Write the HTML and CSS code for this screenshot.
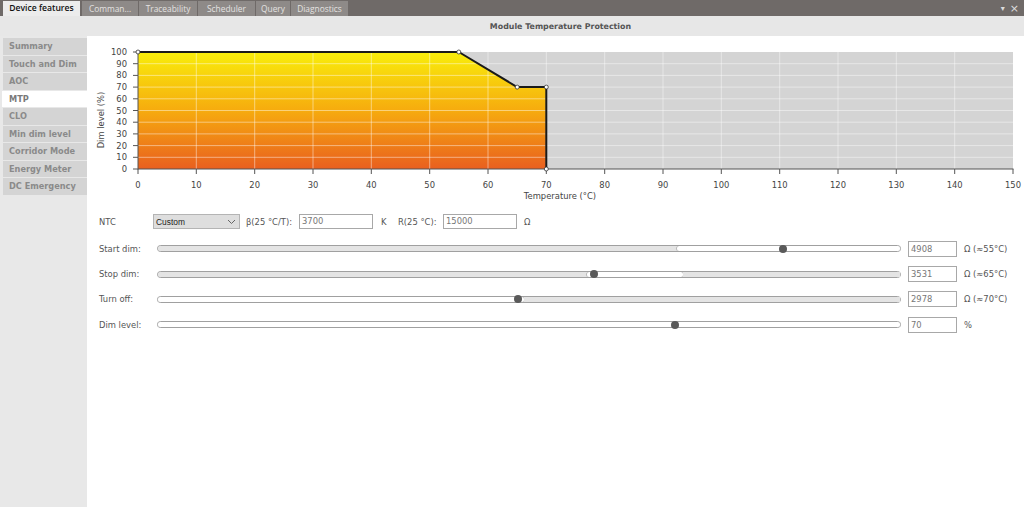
FILE: index.html
```html
<!DOCTYPE html>
<html>
<head>
<meta charset="utf-8">
<link rel="stylesheet" href="styles.css">
</head>
<body>
<div class="app">
  <div class="tabbar">
    <div class="tabs">
      <div class="tab active">Device features</div>
      <div class="tab t-cmd">Comman...</div>
      <div class="tab t-trace">Traceability</div>
      <div class="tab t-sched">Scheduler</div>
      <div class="tab t-query">Query</div>
      <div class="tab t-diag">Diagnostics</div>
    </div>
    <div class="winctl"><span class="dd">▾</span><span class="x">×</span></div>
  </div>
  <div class="header"><span class="title">Module Temperature Protection</span></div>
  <div class="main">
    <div class="sidebar">
      <div class="item">Summary</div>
      <div class="item">Touch and Dim</div>
      <div class="item">AOC</div>
      <div class="item active">MTP</div>
      <div class="item">CLO</div>
      <div class="item">Min dim level</div>
      <div class="item">Corridor Mode</div>
      <div class="item">Energy Meter</div>
      <div class="item">DC Emergency</div>
    </div>
    <div class="content">
      <svg class="chart" width="937" height="170" viewBox="87 36 937 170" xmlns="http://www.w3.org/2000/svg">
        <defs>
          <linearGradient id="fillg" gradientUnits="userSpaceOnUse" x1="0" y1="52" x2="0" y2="169">
            <stop offset="0" stop-color="#f9ee0b"/>
            <stop offset="0.5" stop-color="#f6ab0e"/>
            <stop offset="1" stop-color="#e95f1f"/>
          </linearGradient>
        </defs>
        <rect x="138" y="52" width="875" height="117" fill="#d4d4d4"/>
        <polygon points="138,52 458.8,52 517.2,87.1 546.3,87.1 546.3,169 138,169" fill="url(#fillg)"/>
        <g stroke="#ffffff" stroke-opacity="0.45" stroke-width="1">
          <line x1="196.3" y1="52" x2="196.3" y2="169"/>
          <line x1="254.7" y1="52" x2="254.7" y2="169"/>
          <line x1="313" y1="52" x2="313" y2="169"/>
          <line x1="371.3" y1="52" x2="371.3" y2="169"/>
          <line x1="429.7" y1="52" x2="429.7" y2="169"/>
          <line x1="488" y1="52" x2="488" y2="169"/>
          <line x1="546.3" y1="52" x2="546.3" y2="169"/>
          <line x1="604.7" y1="52" x2="604.7" y2="169"/>
          <line x1="663" y1="52" x2="663" y2="169"/>
          <line x1="721.3" y1="52" x2="721.3" y2="169"/>
          <line x1="779.7" y1="52" x2="779.7" y2="169"/>
          <line x1="838" y1="52" x2="838" y2="169"/>
          <line x1="896.3" y1="52" x2="896.3" y2="169"/>
          <line x1="954.7" y1="52" x2="954.7" y2="169"/>
          <line x1="138" y1="63.7" x2="1013" y2="63.7"/>
          <line x1="138" y1="75.4" x2="1013" y2="75.4"/>
          <line x1="138" y1="87.1" x2="1013" y2="87.1"/>
          <line x1="138" y1="98.8" x2="1013" y2="98.8"/>
          <line x1="138" y1="110.5" x2="1013" y2="110.5"/>
          <line x1="138" y1="122.2" x2="1013" y2="122.2"/>
          <line x1="138" y1="133.9" x2="1013" y2="133.9"/>
          <line x1="138" y1="145.6" x2="1013" y2="145.6"/>
          <line x1="138" y1="157.3" x2="1013" y2="157.3"/>
        </g>
        <g stroke="#555" stroke-width="1">
          <line x1="138" y1="52" x2="138" y2="169.5"/>
          <line x1="138" y1="169" x2="1013.5" y2="169"/>
          <line x1="133" y1="52" x2="138" y2="52"/>
          <line x1="133" y1="63.7" x2="138" y2="63.7"/>
          <line x1="133" y1="75.4" x2="138" y2="75.4"/>
          <line x1="133" y1="87.1" x2="138" y2="87.1"/>
          <line x1="133" y1="98.8" x2="138" y2="98.8"/>
          <line x1="133" y1="110.5" x2="138" y2="110.5"/>
          <line x1="133" y1="122.2" x2="138" y2="122.2"/>
          <line x1="133" y1="133.9" x2="138" y2="133.9"/>
          <line x1="133" y1="145.6" x2="138" y2="145.6"/>
          <line x1="133" y1="157.3" x2="138" y2="157.3"/>
          <line x1="133" y1="169" x2="138" y2="169"/>
          <line x1="138" y1="169" x2="138" y2="174"/>
          <line x1="196.3" y1="169" x2="196.3" y2="174"/>
          <line x1="254.7" y1="169" x2="254.7" y2="174"/>
          <line x1="313" y1="169" x2="313" y2="174"/>
          <line x1="371.3" y1="169" x2="371.3" y2="174"/>
          <line x1="429.7" y1="169" x2="429.7" y2="174"/>
          <line x1="488" y1="169" x2="488" y2="174"/>
          <line x1="546.3" y1="169" x2="546.3" y2="174"/>
          <line x1="604.7" y1="169" x2="604.7" y2="174"/>
          <line x1="663" y1="169" x2="663" y2="174"/>
          <line x1="721.3" y1="169" x2="721.3" y2="174"/>
          <line x1="779.7" y1="169" x2="779.7" y2="174"/>
          <line x1="838" y1="169" x2="838" y2="174"/>
          <line x1="896.3" y1="169" x2="896.3" y2="174"/>
          <line x1="954.7" y1="169" x2="954.7" y2="174"/>
          <line x1="1013" y1="169" x2="1013" y2="174"/>
        </g>
        <polyline points="138,52 458.8,52 517.2,87.1 546.3,87.1 546.3,169" fill="none" stroke="#1a1a1a" stroke-width="2" stroke-linejoin="round"/>
        <g fill="#ffffff" stroke="#333" stroke-width="0.8">
          <circle cx="138" cy="52" r="2"/>
          <circle cx="458.8" cy="52" r="2"/>
          <circle cx="517.2" cy="87.1" r="2"/>
          <circle cx="546.3" cy="87.1" r="2"/>
          <circle cx="546.3" cy="169" r="2"/>
        </g>
        <g class="axtext" text-anchor="end">
          <text x="127" y="55">100</text>
          <text x="127" y="66.7">90</text>
          <text x="127" y="78.4">80</text>
          <text x="127" y="90.1">70</text>
          <text x="127" y="101.8">60</text>
          <text x="127" y="113.5">50</text>
          <text x="127" y="125.2">40</text>
          <text x="127" y="136.9">30</text>
          <text x="127" y="148.6">20</text>
          <text x="127" y="160.3">10</text>
          <text x="127" y="172">0</text>
        </g>
        <g class="axtext" text-anchor="middle">
          <text x="138" y="188">0</text>
          <text x="196.3" y="188">10</text>
          <text x="254.7" y="188">20</text>
          <text x="313" y="188">30</text>
          <text x="371.3" y="188">40</text>
          <text x="429.7" y="188">50</text>
          <text x="488" y="188">60</text>
          <text x="546.3" y="188">70</text>
          <text x="604.7" y="188">80</text>
          <text x="663" y="188">90</text>
          <text x="721.3" y="188">100</text>
          <text x="779.7" y="188">110</text>
          <text x="838" y="188">120</text>
          <text x="896.3" y="188">130</text>
          <text x="954.7" y="188">140</text>
          <text x="1013" y="188">150</text>
          <text x="560" y="199">Temperature (°C)</text>
          <text x="0" y="0" transform="translate(104,120) rotate(-90)">Dim level (%)</text>
        </g>
      </svg>

      <div class="form">
        <div class="ntc-row">
          <span class="lbl ntc-lbl">NTC</span>
          <div class="select"><span>Custom</span><svg width="9" height="6" viewBox="0 0 9 6"><path d="M1 1 L4.5 4.5 L8 1" fill="none" stroke="#666" stroke-width="1"/></svg></div>
          <span class="lbl beta">β(25 °C/T):</span>
          <div class="input w74">3700</div>
          <span class="lbl unit-k">K</span>
          <span class="lbl r25">R(25 °C):</span>
          <div class="input w74">15000</div>
          <span class="lbl unit-o">Ω</span>
        </div>

        <div class="srow">
          <span class="lbl slbl">Start dim:</span>
          <div class="track">
            <div class="seg gray" style="width:520px"></div>
            <div class="seg white" style="width:224px"></div>
            <div class="thumb" style="left:621px"></div>
          </div>
          <div class="input w49">4908</div>
          <span class="lbl sunit">Ω (≈55°C)</span>
        </div>
        <div class="srow">
          <span class="lbl slbl">Stop dim:</span>
          <div class="track">
            <div class="seg gray" style="width:430px"></div>
            <div class="seg white" style="width:96px"></div>
            <div class="seg gray" style="width:218px"></div>
            <div class="thumb" style="left:432px"></div>
          </div>
          <div class="input w49">3531</div>
          <span class="lbl sunit">Ω (≈65°C)</span>
        </div>
        <div class="srow">
          <span class="lbl slbl">Turn off:</span>
          <div class="track">
            <div class="seg white" style="width:367px"></div>
            <div class="seg gray" style="width:377px"></div>
            <div class="thumb" style="left:356px"></div>
          </div>
          <div class="input w49">2978</div>
          <span class="lbl sunit">Ω (≈70°C)</span>
        </div>
        <div class="srow">
          <span class="lbl slbl">Dim level:</span>
          <div class="track">
            <div class="seg white" style="width:744px"></div>
            <div class="thumb" style="left:513px"></div>
          </div>
          <div class="input w49">70</div>
          <span class="lbl sunit">%</span>
        </div>
      </div>
    </div>
  </div>
</div>
</body>
</html>
```

FILE: styles.css
```css
* { box-sizing: border-box; }
html, body { margin: 0; padding: 0; }
body {
  width: 1024px;
  height: 507px;
  overflow: hidden;
  background: #ffffff;
  font-family: "DejaVu Sans", Verdana, sans-serif;
}
.app { display: flex; flex-direction: column; height: 507px; }

.tabbar {
  height: 16px;
  background: #6f6a68;
  display: flex;
  justify-content: space-between;
  align-items: flex-end;
  flex: none;
}
.tabs { display: flex; padding-left: 3px; gap: 1px; height: 15px; }
.tab {
  font-family: "Open Sans", "Liberation Sans", sans-serif;
  font-size: 8.4px;
  line-height: 15px;
  color: #e4e2e1;
  background: #8e8a88;
  text-align: center;
  white-space: nowrap;
  overflow: hidden;
}
.tab.active {
  width: 77px;
  background: #ececec;
  color: #111;
  font-weight: 600;
  font-size: 8.6px;
  margin-right: 1px;
}
.t-cmd { width: 56px; }
.t-trace { width: 58px; }
.t-sched { width: 57px; }
.t-query { width: 34px; }
.t-diag { width: 57px; }
.winctl {
  display: flex;
  gap: 5px;
  padding-right: 5px;
  height: 16px;
  align-items: center;
  color: #dcdcdc;
  font-family: "DejaVu Sans", sans-serif;
}
.winctl .dd { font-size: 8px; }
.winctl .x { font-size: 11px; }

.header {
  height: 20px;
  background: #e7e7e7;
  padding-left: 97px;
  display: flex;
  justify-content: center;
  align-items: center;
  flex: none;
}
.title {
  font-size: 7.9px;
  font-weight: bold;
  color: #555;
}

.main { display: flex; flex: 1; min-height: 0; }
.sidebar {
  width: 87px;
  flex: none;
  background: #e8e8e8;
  padding: 2px 0 0 3px;
  display: flex;
  flex-direction: column;
  gap: 1px;
}
.item {
  height: 16.5px;
  background: #d4d4d4;
  color: #8a8a8a;
  font-weight: bold;
  font-size: 8.2px;
  line-height: 16.5px;
  padding-left: 6px;
  white-space: nowrap;
}
.item.active {
  background: #ffffff;
  color: #7a7a7a;
  margin-left: -1px;
  padding-left: 7px;
}

.content { flex: 1; background: #ffffff; }
.chart { display: block; }
.axtext { font-family: "DejaVu Sans", sans-serif; font-size: 8.4px; fill: #444; }

.form { padding: 8px 0 0 12px; }
.lbl { font-size: 8.4px; color: #555; white-space: nowrap; }
.ntc-row { display: flex; align-items: center; height: 15px; }
.ntc-lbl { width: 54px; }
.select {
  width: 87px;
  height: 15px;
  background: #dedede;
  border: 1px solid #b4b4b4;
  display: flex;
  justify-content: space-between;
  align-items: center;
  padding: 0 3px 0 2px;
  font-family: "Liberation Sans", Arial, sans-serif;
  font-size: 8.4px;
  color: #222;
}
.beta { margin-left: 6px; width: 53px; }
.input {
  height: 15px;
  border: 1px solid #a8a8a8;
  background: #fff;
  font-size: 8.4px;
  color: #777;
  line-height: 13px;
  padding-left: 2px;
}
.w74 { width: 74px; }
.w49 { width: 49px; height: 16px; line-height: 14px; }
.unit-k { margin-left: 8px; width: 17px; }
.r25 { width: 45px; }
.unit-o { margin-left: 7px; }

.srow { display: flex; align-items: center; height: 25.4px; }
.ntc-row + .srow { margin-top: 7px; }
.slbl { width: 58px; }
.track {
  position: relative;
  width: 744px;
  height: 7px;
  display: flex;
  border: 1px solid #a0a0a0;
  border-radius: 4px;
  background: #e4e4e4;
}
.seg { height: 100%; }
.seg.gray { background: #e4e4e4; }
.seg.white { background: #fff; border-radius: 3px; box-shadow: -1px 0 0 #bbb, 1px 0 0 #bbb; }
.seg:first-child { border-radius: 3px 0 0 3px; }
.seg:last-of-type { border-radius: 0 3px 3px 0; }
.seg.white:first-child { border-radius: 3px; }
.track .seg:only-of-type { border-radius: 3px; box-shadow: none; }
.thumb {
  position: absolute;
  top: -1.5px;
  width: 8px;
  height: 8px;
  border-radius: 50%;
  background: #5a5a5a;
}
.srow .input { margin-left: 7px; }
.sunit { margin-left: 7px; }
```
